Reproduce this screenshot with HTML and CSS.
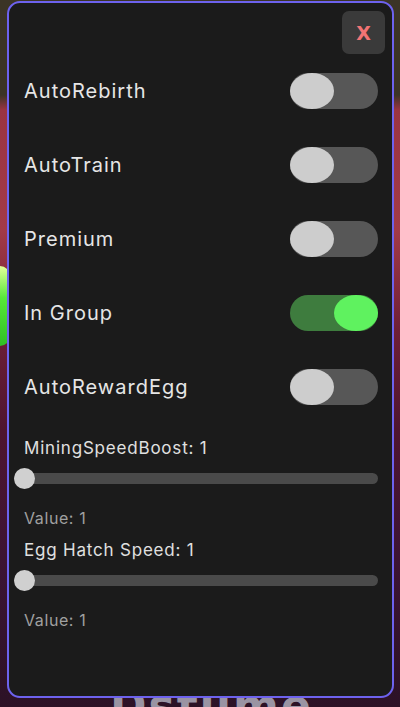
FILE: index.html
```html
<!DOCTYPE html>
<html lang="en">
<head>
  <meta charset="UTF-8">
  <meta name="viewport" content="width=device-width, initial-scale=1.0">
  <title>Settings</title>
  <link rel="stylesheet" href="styles.css">
</head>
<body>
  <div class="scene">
    <div class="blob"></div>
    <div class="backdrop-text">Dstume</div>

    <div class="panel">
      <div class="panel-head">
        <button class="close-btn">X</button>
      </div>

      <div class="toggle-row">
        <span class="toggle-label">AutoRebirth</span>
        <span class="switch"><span class="knob"></span></span>
      </div>
      <div class="toggle-row">
        <span class="toggle-label">AutoTrain</span>
        <span class="switch"><span class="knob"></span></span>
      </div>
      <div class="toggle-row">
        <span class="toggle-label">Premium</span>
        <span class="switch"><span class="knob"></span></span>
      </div>
      <div class="toggle-row">
        <span class="toggle-label">In Group</span>
        <span class="switch on"><span class="knob"></span></span>
      </div>
      <div class="toggle-row">
        <span class="toggle-label">AutoRewardEgg</span>
        <span class="switch"><span class="knob"></span></span>
      </div>

      <div class="slider-group first">
        <label class="slider-label">MiningSpeedBoost: 1</label>
        <input class="slider" type="range" min="1" max="10" value="1">
        <p class="slider-value">Value: 1</p>
      </div>
      <div class="slider-group">
        <label class="slider-label">Egg Hatch Speed: 1</label>
        <input class="slider" type="range" min="1" max="10" value="1">
        <p class="slider-value">Value: 1</p>
      </div>
    </div>
  </div>
</body>
</html>
```

FILE: styles.css
```css
body {
  margin: 0;
  padding: 0;
  font-family: Inter, "Open Sans", sans-serif;
  background-color: #2a1420;
  overflow: hidden;
}

.scene {
  position: relative;
  width: 400px;
  height: 707px;
  overflow: hidden;
  background: linear-gradient(to bottom,
    #3b3426 0px, #3b3426 95px,
    #9a3442 110px, #a23a47 230px,
    #6e1f36 330px, #4e1530 430px,
    #3c1434 560px, #2c1226 707px);
}

/* green thing peeking out on the left */
.blob {
  position: absolute;
  left: -10px;
  top: 266px;
  width: 20px;
  height: 80px;
  border-radius: 10px;
  background: linear-gradient(to bottom, #e4ff9a 0%, #57e83a 40%, #2fc023 100%);
}

/* game text behind the panel, only its top shows */
.backdrop-text {
  position: absolute;
  left: 110px;
  top: 678px;
  height: 29px;
  overflow: hidden;
  font-family: "DejaVu Sans", sans-serif;
  font-weight: bold;
  font-size: 44px;
  line-height: 56px;
  letter-spacing: 2px;
  color: #9a94a3;
}

.panel {
  position: relative;
  z-index: 1;
  margin: 1px 6px 0 7px;
  height: 697px;
  box-sizing: border-box;
  padding: 8px 14px 0 15px;
  background: #1b1b1b;
  border: 2px solid #6d62ee;
  border-radius: 13px;
}

.panel-head {
  display: flex;
  justify-content: flex-end;
  height: 43px;
  margin-right: -7px;
}

.close-btn {
  width: 43px;
  height: 43px;
  border: none;
  border-radius: 7px;
  background: #3a3a3a;
  color: #f27474;
  font-family: "DejaVu Sans", sans-serif;
  font-size: 19px;
  font-weight: bold;
  cursor: pointer;
}

.toggle-row {
  height: 74px;
  display: flex;
  align-items: center;
  justify-content: space-between;
}

.toggle-label {
  color: #e6e6e6;
  font-size: 20px;
  letter-spacing: 1px;
}

.switch {
  position: relative;
  width: 88px;
  height: 36px;
  border-radius: 18px;
  background: #575757;
}

.knob {
  position: absolute;
  left: 0;
  top: 0;
  width: 44px;
  height: 36px;
  border-radius: 50%;
  background: #cdcdcd;
}

.switch.on {
  background: #3e7c3e;
}

.switch.on .knob {
  left: 44px;
  background: #5ff25f;
}

.slider-group {
  display: flex;
  flex-direction: column;
}

.slider-group.first {
  margin-top: 14px;
}

.slider-label {
  color: #e0e0e0;
  font-size: 17px;
  line-height: 20px;
  letter-spacing: 0.8px;
}

.slider {
  -webkit-appearance: none;
  appearance: none;
  margin: 10px 0 0 -10px;
  width: calc(100% + 10px);
  height: 21px;
  background: transparent;
}

.slider::-webkit-slider-runnable-track {
  height: 11px;
  border-radius: 6px;
  background: #4a4a4a;
}

.slider::-webkit-slider-thumb {
  -webkit-appearance: none;
  width: 21px;
  height: 21px;
  margin-top: -5px;
  border-radius: 50%;
  background: #d0d0d0;
}

.slider-value {
  margin: 19px 0 12px 0;
  color: #a0a0a0;
  font-size: 16px;
  line-height: 20px;
  letter-spacing: 0.6px;
}
```
